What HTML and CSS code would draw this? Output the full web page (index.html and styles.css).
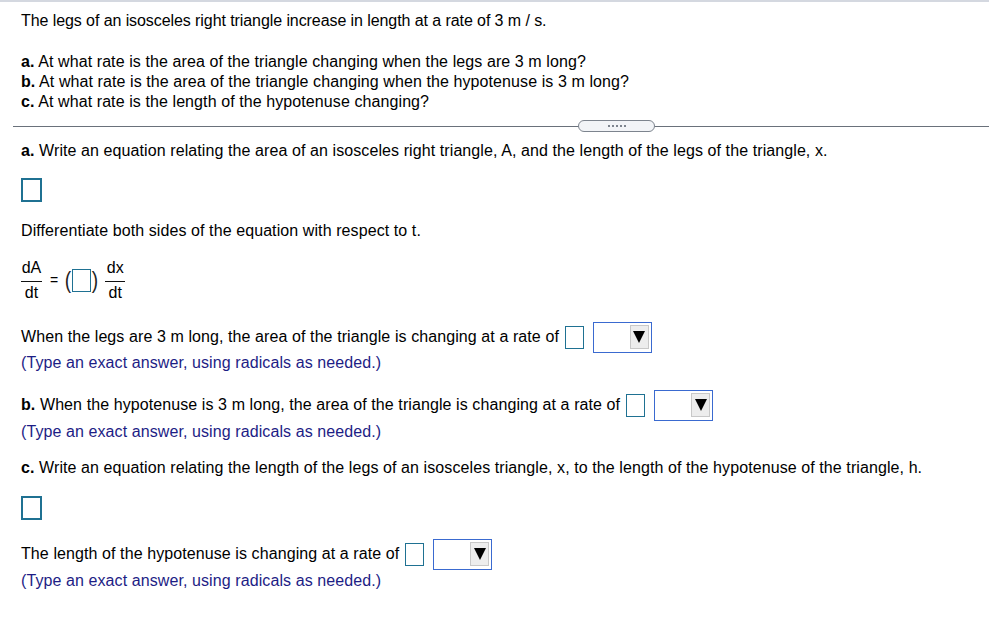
FILE: index.html
```html
<!DOCTYPE html>
<html>
<head>
<meta charset="utf-8">
<link rel="stylesheet" href="styles.css">
</head>
<body>
<div class="page">
  <div class="intro">
    <p class="lead">The legs of an isosceles right triangle increase in length at a rate of 3 m / s.</p>
    <p class="qlist"><b>a.</b> At what rate is the area of the triangle changing when the legs are 3 m long?<br>
    <b>b.</b> At what rate is the area of the triangle changing when the hypotenuse is 3 m long?<br>
    <b>c.</b> At what rate is the length of the hypotenuse changing?</p>
  </div>

  <div class="sep"><span class="pill"><i></i><i></i><i></i><i></i><i></i></span></div>

  <div class="work">
    <p class="line l-a"><b>a.</b> Write an equation relating the area of an isosceles right triangle, A, and the length of the legs of the triangle, x.</p>
    <div class="bigbox b1"></div>
    <p class="line l-diff">Differentiate both sides of the equation with respect to t.</p>
    <div class="eq">
      <span class="frac"><span class="num">dA</span><span class="den">dt</span></span>
      <span class="eqsign">=</span>
      <span class="paren">(</span><span class="smallbox"></span><span class="paren">)</span>
      <span class="frac f2"><span class="num">dx</span><span class="den">dt</span></span>
    </div>
    <div class="row r1">
      <span>When the legs are 3 m long, the area of the triangle is changing at a rate of</span>
      <span class="ibox"></span>
      <span class="select"><span class="btn"></span></span>
    </div>
    <p class="note">(Type an exact answer, using radicals as needed.)</p>
    <div class="row r2">
      <span><b>b.</b> When the hypotenuse is 3 m long, the area of the triangle is changing at a rate of</span>
      <span class="ibox"></span>
      <span class="select"><span class="btn"></span></span>
    </div>
    <p class="note n2">(Type an exact answer, using radicals as needed.)</p>
    <p class="line l-c"><b>c.</b> Write an equation relating the length of the legs of an isosceles triangle, x, to the length of the hypotenuse of the triangle, h.</p>
    <div class="bigbox b2"></div>
    <div class="row r3">
      <span>The length of the hypotenuse is changing at a rate of</span>
      <span class="ibox"></span>
      <span class="select"><span class="btn"></span></span>
    </div>
    <p class="note n2">(Type an exact answer, using radicals as needed.)</p>
  </div>
</div>
</body>
</html>
```

FILE: styles.css
```css
html, body {
  margin: 0;
  padding: 0;
  background: #ffffff;
}
body {
  font-family: "Liberation Sans", Arial, sans-serif;
  font-size: 16px;
  letter-spacing: 0.09px;
  color: #000000;
}
.page {
  border-top: 2px solid #d4d8e0;
  width: 989px;
  height: 642px;
  overflow: hidden;
}
p { margin: 0; }
b { font-weight: bold; }

.intro {
  padding: 9px 0 0 21px;
  line-height: 20px;
}
.lead { margin-bottom: 21px; letter-spacing: -0.08px; }

.sep {
  margin: 8px 0 0 13px;
  height: 12px;
  position: relative;
  display: flex;
  justify-content: flex-start;
  align-items: center;
  padding-left: 565px;
}
.sep::before {
  content: "";
  position: absolute;
  left: 0;
  right: 0;
  top: 6px;
  height: 1px;
  background: #6a717b;
}
.pill {
  position: relative;
  width: 75px;
  height: 10px;
  border: 1px solid #7d848e;
  border-radius: 6px;
  background: #f2f4f7;
  display: flex;
  justify-content: center;
  align-items: center;
  gap: 2px;
}
.pill i {
  width: 2px;
  height: 2px;
  background: #7d848e;
}

.work {
  padding-left: 21px;
}
.line, .note, .row {
  line-height: 20px;
}
.l-a { margin-top: 9px; }
.bigbox {
  width: 17px;
  height: 20px;
  border: 2px solid #1f7192;
}
.b1 { margin-top: 17px; }
.l-diff { margin-top: 19px; }

.eq {
  margin-top: 18px;
  height: 42px;
  display: flex;
  align-items: center;
  letter-spacing: 0;
}
.frac {
  display: flex;
  flex-direction: column;
  align-items: center;
  width: 21px;
}
.num {
  line-height: 18px;
  padding: 0 0 4px;
  border-bottom: 1px solid #111;
  width: 100%;
  text-align: center;
}
.den {
  line-height: 18px;
  padding-top: 2px;
}
.eqsign {
  margin: 0 6px 0 8px;
  font-size: 14px;
}
.paren {
  font-size: 24px;
  font-weight: 100;
  line-height: 28px;
  color: #222;
  transform: scaleX(0.8);
}
.smallbox {
  width: 17px;
  height: 21px;
  border: 1.5px solid #1f7192;
}
.f2 { margin-left: 6px; width: 20px; }

.row {
  display: flex;
  align-items: center;
  height: 32px;
}
.r1 { margin-top: 20px; }
.r2 { margin-top: 16px; }
.r3 { margin-top: 18px; }
.ibox {
  width: 17px;
  height: 21px;
  border: 1.5px solid #1f7192;
  margin-left: 6px;
}
.select {
  margin-left: 9px;
  width: 55px;
  height: 29px;
  border: 1.5px solid #3a6ad0;
  display: flex;
  justify-content: flex-end;
  align-items: center;
  padding-right: 2px;
}
.btn {
  width: 17px;
  height: 22px;
  background: #ededed;
  border: 1px solid #c8c8c8;
  position: relative;
}
.btn::after {
  content: "";
  position: absolute;
  left: 2.5px;
  top: 5px;
  border-left: 6px solid transparent;
  border-right: 6px solid transparent;
  border-top: 12px solid #000;
}
.note { color: #1d1d85; }
.n2 { margin-top: 1px; }
.l-c { margin-top: 16px; }
.b2 { margin-top: 18px; }
```
